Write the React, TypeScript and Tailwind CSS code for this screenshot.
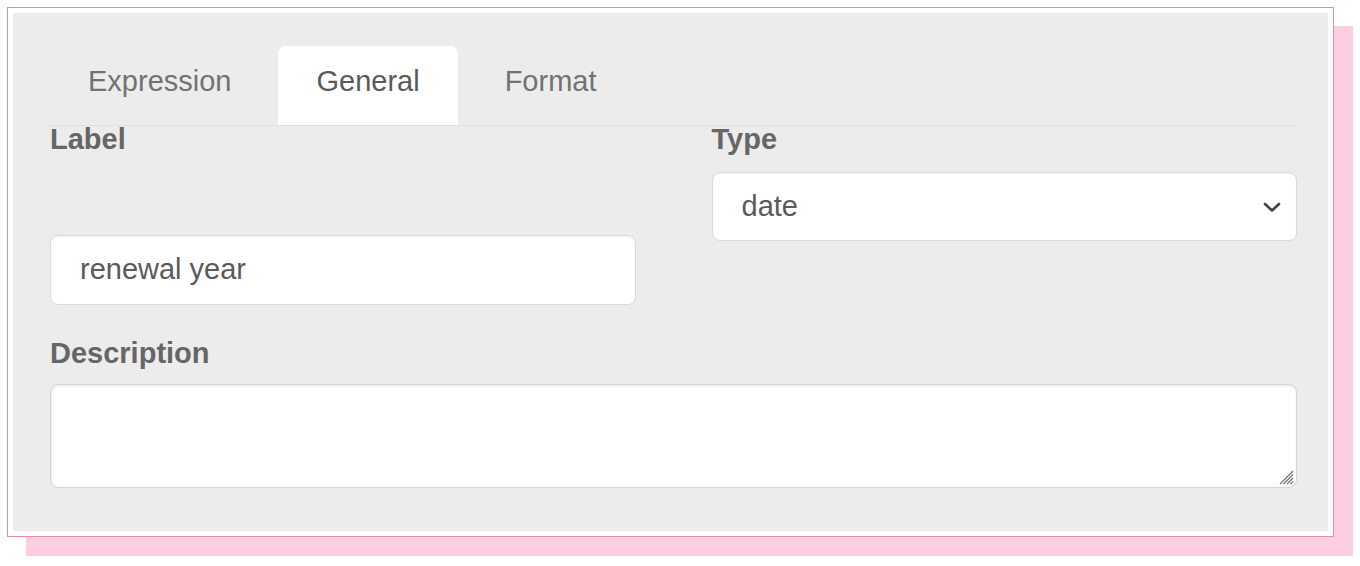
import React from "react";

const tabs = ["Expression", "General", "Format"];

export default function App() {
  return (
    <div className="min-h-[566px] bg-white pt-[7px] pl-[7px] font-['Liberation_Sans',Arial,sans-serif]">
      {/* pink frame with offset shadow */}
      <div className="w-[1327px] h-[530px] bg-[#e58db0] p-px shadow-[19px_19px_0_#fdcde1]">
        <div className="h-full bg-white p-[5px]">
          <div className="h-full bg-[#ececec] pt-[33px] pl-[37px] pr-[31px]">
            {/* Tabs */}
            <div className="flex gap-[9px] border-b border-[#e0e0e0] -ml-[5px] pl-[5px]">
              {tabs.map((t) => {
                const active = t === "General";
                return (
                  <div
                    key={t}
                    className={
                      active
                        ? "h-[79px] -mb-px px-[38px] pt-[19px] text-[29px] leading-[32px] text-[#5a5a5a] bg-white rounded-t-[8px]"
                        : "h-[79px] px-[38px] pt-[19px] text-[29px] leading-[32px] text-[#727272]"
                    }
                  >
                    {t}
                  </div>
                );
              })}
            </div>

            {/* Label / Type */}
            <div className="grid grid-cols-2 gap-x-[76px] pt-[3px]">
              <div>
                <div className="text-[29px] leading-[20px] font-bold text-[#666]">Label</div>
                <div className="mt-[86px] h-[70px] rounded-[8px] border border-[#dadada] bg-white pl-[29px] shadow-[inset_0_1px_2px_rgba(0,0,0,0.06)] flex items-center">
                  <input
                    readOnly
                    value="renewal year"
                    className="w-full bg-transparent text-[29px] text-[#5a5a5a] outline-none"
                  />
                </div>
              </div>
              <div>
                <div className="text-[29px] leading-[20px] font-bold text-[#666]">Type</div>
                <div className="mt-[23px] h-[69px] rounded-[8px] border border-[#dadada] bg-white pl-[29px] pr-[15px] shadow-[inset_0_1px_2px_rgba(0,0,0,0.06)] flex items-center justify-between">
                  <span className="text-[29px] text-[#5a5a5a]">date</span>
                  <svg width="18" height="12" viewBox="0 0 18 12" fill="none">
                    <polyline
                      points="2,3 9,9.5 16,3"
                      stroke="#444"
                      strokeWidth="2.6"
                      strokeLinecap="round"
                      strokeLinejoin="round"
                    />
                  </svg>
                </div>
              </div>
            </div>

            {/* Description */}
            <div className="mt-[38px] text-[29px] leading-[20px] font-bold text-[#666]">Description</div>
            <div className="relative mt-[21px]">
              <textarea
                readOnly
                className="block w-full h-[104px] resize-none rounded-[8px] border border-[#d6d6d6] bg-white shadow-[inset_1px_1px_3px_rgba(0,0,0,0.1)] outline-none"
              />
              {/* resize grip */}
              <svg
                className="absolute right-[3px] bottom-[3px]"
                width="16"
                height="16"
                viewBox="0 0 16 16"
              >
                <line x1="15" y1="2" x2="2" y2="15" stroke="#777" strokeWidth="1.2" />
                <line x1="15" y1="5.5" x2="5.5" y2="15" stroke="#777" strokeWidth="1.2" />
                <line x1="15" y1="9" x2="9" y2="15" stroke="#777" strokeWidth="1.2" />
                <line x1="15" y1="12.5" x2="12.5" y2="15" stroke="#777" strokeWidth="1.2" />
              </svg>
            </div>
          </div>
        </div>
      </div>
    </div>
  );
}
